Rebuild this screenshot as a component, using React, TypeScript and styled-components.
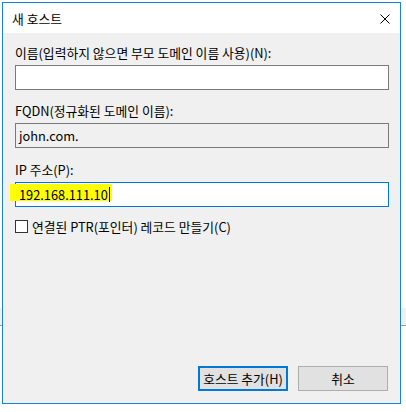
import { FC } from 'react';
import styled, { createGlobalStyle } from 'styled-components';

const GlobalStyle = createGlobalStyle`
    html, body {
        margin: 0;
        padding: 0;
        background: #ffffff;
    }
    body {
        font-family: "Noto Sans CJK KR", "Noto Sans", sans-serif;
        font-size: 12.8px;
        color: #000000;
    }
`;

const Page = styled.div`
    width: 406px;
    height: 412px;
    padding: 2px 0 0 2px;
    box-sizing: border-box;
    background: linear-gradient(
        to bottom,
        #ffffff 0 308px,
        #f0f0f0 308px 325px,
        #9a9a9a 325px 326px,
        #ffffff 326px
    );
`;

const Window = styled.div`
    width: 399px;
    height: 402px;
    box-sizing: border-box;
    border: 1px solid #1883d7;
    background: #f0f0f0;
    display: flex;
    flex-direction: column;
`;

const TitleBar = styled.div`
    height: 30px;
    background: #ffffff;
    display: flex;
    align-items: center;
    justify-content: space-between;
    padding: 0 9px 0 9px;
    flex-shrink: 0;
`;

const Title = styled.div`
    line-height: 16px;
    margin-top: 2px;
`;

const CloseButton = styled.div`
    width: 10px;
    height: 10px;
    margin-right: 1px;
    margin-top: 2px;
    display: flex;
`;

const Body = styled.div`
    flex: 1;
    display: flex;
    flex-direction: column;
    padding: 12px 11px 0 12px;
`;

const Label = styled.div<{ $gap: number }>`
    height: 16px;
    line-height: 16px;
    margin-top: ${(p) => p.$gap}px;
    margin-bottom: 4px;
    white-space: nowrap;
`;

const Field = styled.div<{ $readOnly?: boolean; $focused?: boolean }>`
    position: relative;
    height: 25px;
    box-sizing: border-box;
    border: 1px solid ${(p) => (p.$focused ? '#0078d7' : '#7a7a7a')};
    background: ${(p) => (p.$readOnly ? '#f0f0f0' : '#ffffff')};
    display: flex;
    align-items: center;
    padding-left: 2px;
    line-height: 16px;
`;

const Highlight = styled.div`
    position: absolute;
    left: -6px;
    top: 1px;
    width: 102px;
    height: 17px;
    background: #ffff00;
`;

const FieldText = styled.span`
    position: relative;
    padding-left: 1px;
`;

const Caret = styled.span`
    position: relative;
    display: inline-block;
    width: 1px;
    height: 15px;
    background: #000000;
    margin-left: 1px;
`;

const CheckRow = styled.label`
    display: flex;
    align-items: center;
    gap: 4px;
    margin-top: 12px;
    height: 14px;
`;

const CheckBox = styled.span`
    width: 13px;
    height: 13px;
    box-sizing: border-box;
    border: 1px solid #333333;
    background: #ffffff;
`;

const Footer = styled.div`
    display: flex;
    justify-content: flex-end;
    gap: 10px;
    padding: 0 12px 12px 0;
`;

const Button = styled.div<{ $primary?: boolean }>`
    width: 90px;
    height: 25px;
    box-sizing: border-box;
    border: ${(p) => (p.$primary ? '2px solid #0078d7' : '1px solid #adadad')};
    background: #e1e1e1;
    display: flex;
    align-items: center;
    justify-content: center;
    line-height: 16px;
`;

const Spacer = styled.div`
    flex: 1;
`;

const App: FC = () => {
    return (
        <>
            <GlobalStyle />
            <Page>
                <Window>
                    <TitleBar>
                        <Title>새 호스트</Title>
                        <CloseButton>
                            <svg width="10" height="10" viewBox="0 0 10 10">
                                <path d="M0.5 0.5 L9.5 9.5 M9.5 0.5 L0.5 9.5" stroke="#000" strokeWidth="1" fill="none" />
                            </svg>
                        </CloseButton>
                    </TitleBar>
                    <Body>
                        <Label $gap={0}>이름(입력하지 않으면 부모 도메인 이름 사용)(N):</Label>
                        <Field />
                        <Label $gap={13}>FQDN(정규화된 도메인 이름):</Label>
                        <Field $readOnly>
                            <FieldText>john.com.</FieldText>
                        </Field>
                        <Label $gap={14}>IP 주소(P):</Label>
                        <Field $focused>
                            <Highlight />
                            <FieldText>192.168.111.10</FieldText>
                            <Caret />
                        </Field>
                        <CheckRow>
                            <CheckBox />
                            <span>연결된 PTR(포인터) 레코드 만들기(C)</span>
                        </CheckRow>
                        <Spacer />
                    </Body>
                    <Footer>
                        <Button $primary>호스트 추가(H)</Button>
                        <Button>취소</Button>
                    </Footer>
                </Window>
            </Page>
        </>
    );
};

export default App;
